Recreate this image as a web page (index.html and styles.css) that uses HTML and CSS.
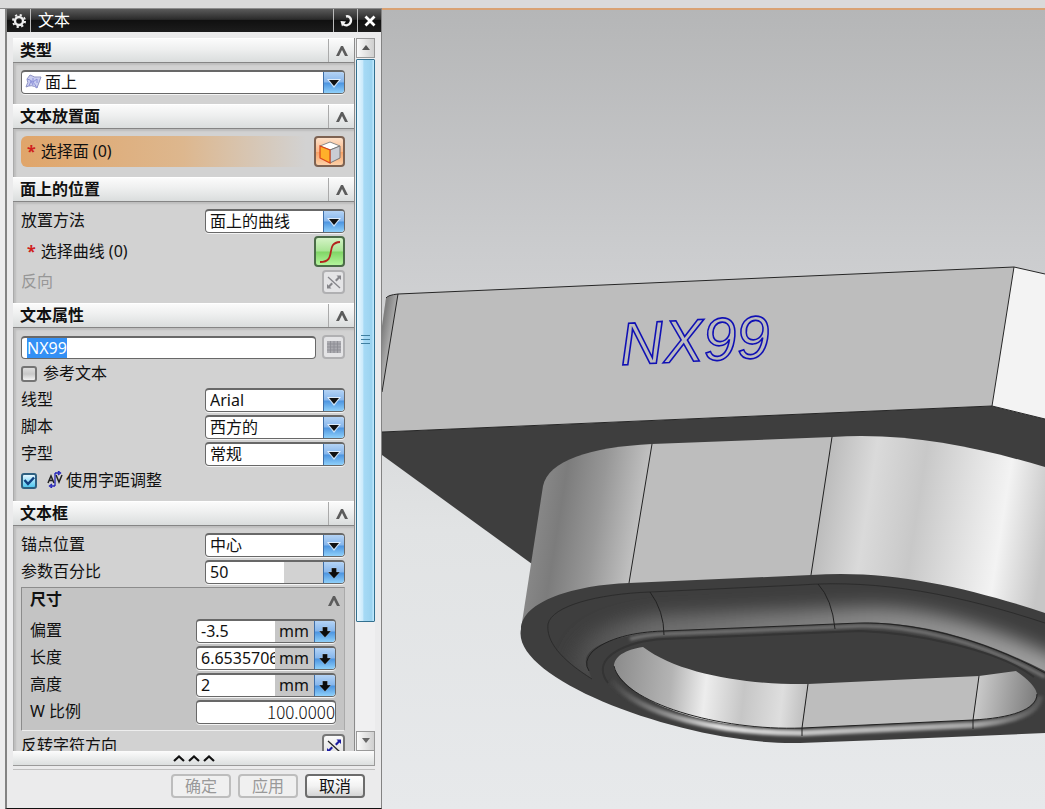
FILE: index.html
```html
<!DOCTYPE html>
<html lang="zh-CN">
<head>
<meta charset="utf-8">
<title>文本</title>
<link rel="stylesheet" href="styles.css">
</head>
<body>
<svg class="defs" aria-hidden="true">
  <symbol id="chev" viewBox="0 0 12 10"><path d="M0 10 5 0H7L12 10H9L6 4 3 10Z" fill="#5c5c5c"/></symbol>
  <symbol id="tri" viewBox="0 0 14 10"><path d="M0 1H14L7 10Z" fill="#fff" opacity=".7"/><path d="M2 2H12L7 8Z" fill="#111"/></symbol>
  <symbol id="down" viewBox="0 0 14 14"><path d="M4.500 2H9.500V6H13L7 12.500 1 6H4.500Z" fill="#0c0c0c" stroke="#fff" stroke-opacity=".35" stroke-width=".6"/></symbol>
  <symbol id="swap" viewBox="0 0 18 18"><path d="M3 4 15 15" stroke="currentColor" stroke-width="1.300"/><path d="M10 7 13 4 11.500 2.500H16V7L14.500 5.500 11.500 8.500ZM8 11 5 14 6.500 15.500H2V11L3.500 12.500 6.500 9.500Z" fill="var(--tip)"/></symbol>
</svg>
<header class="topstrip"></header>
<main class="workspace">
  <form class="dialog" aria-labelledby="title">
    <div class="titlebar">
      <button type="button" class="tb gear" aria-label="选项"><svg width="14" height="14" viewBox="0 0 14 14"><circle cx="7" cy="7" r="4" fill="none" stroke="#eee" stroke-width="2.400"/><circle cx="7" cy="7" r="6" fill="none" stroke="#eee" stroke-width="2" stroke-dasharray="2.200 2.510"/></svg></button>
      <h1 id="title">文本</h1>
      <button type="button" class="tb" aria-label="重置"><svg width="14" height="14" viewBox="0 0 14 14"><path d="M7 2.500C10.500 1.500 13 5 11.500 8.500 10 12 6 12 4 10" fill="none" stroke="#f4f4f4" stroke-width="2.400"/><path d="M1.500 7 7 7.500 3 12.500Z" fill="#f4f4f4"/></svg></button>
      <button type="button" class="tb" aria-label="关闭"><svg width="12" height="12" viewBox="0 0 12 12"><path d="M1.500 1.500 10.500 10.500M10.500 1.500 1.500 10.500" stroke="#fff" stroke-width="2.800"/></svg></button>
    </div>

    <div class="scroller">
      <div class="content">
        <section>
          <header class="head"><h2>类型</h2><button type="button" aria-label="折叠类型"><svg><use href="#chev"/></svg></button></header>
          <div class="body">
            <div class="combo wide">
              <svg class="face" width="17" height="16" viewBox="0 0 17 16"><path d="M5 1Q9 4 16 3L12 14Q7 10 1 13Q4 8 2 5Z" fill="#c9cdf0" stroke="#8f93c4"/><path d="M2 5Q8 6 12 14M4 12 6 7 8 11M8 4V8L12 5V9" fill="none" stroke="#8a8fd8"/></svg>
              <select aria-label="类型"><option>面上</option></select><span class="arrow"><svg><use href="#tri"/></svg></span>
            </div>
          </div>
        </section>

        <section>
          <header class="head"><h2>文本放置面</h2><button type="button" aria-label="折叠文本放置面"><svg><use href="#chev"/></svg></button></header>
          <div class="body">
            <div class="row tall active">
              <span class="label need"><b>*</b>选择面 (0)</span>
              <button type="button" class="pick orange" aria-label="选择面"><svg width="24" height="24" viewBox="0 0 24 24"><path d="M12 2 22 6 12 10 2 6Z" fill="#fff" stroke="#8a8a8a"/><path d="M12 10 22 6V18L12 23Z" fill="#c9ccd4" stroke="#777"/><path d="M2 6 12 10V23L2 18Z" fill="#ffb02a" stroke="#d9441c" stroke-width="1.200"/></svg></button>
            </div>
          </div>
        </section>

        <section>
          <header class="head"><h2>面上的位置</h2><button type="button" aria-label="折叠面上的位置"><svg><use href="#chev"/></svg></button></header>
          <div class="body">
            <div class="row"><label class="label" for="method">放置方法</label><div class="combo"><select id="method"><option>面上的曲线</option></select><span class="arrow"><svg><use href="#tri"/></svg></span></div></div>
            <div class="row tall"><span class="label need"><b>*</b>选择曲线 (0)</span><button type="button" class="pick green" aria-label="选择曲线"><svg width="24" height="24" viewBox="0 0 24 24"><path d="M2 22C20 22 6 3 22 2" fill="none" stroke="#b3231c" stroke-width="1.800"/></svg></button></div>
            <div class="row"><span class="label off">反向</span><button type="button" class="small off" disabled aria-label="反向"><svg width="18" height="18"><use href="#swap"/></svg></button></div>
          </div>
        </section>

        <section>
          <header class="head"><h2>文本属性</h2><button type="button" aria-label="折叠文本属性"><svg><use href="#chev"/></svg></button></header>
          <div class="body">
            <div class="row"><div class="textbox"><input id="txt" aria-label="文本" value="NX99"></div><button type="button" class="small off" disabled aria-label="参考文本列表"><svg width="14" height="14" viewBox="0 0 14 14"><path d="M0 1H14V13H0Z" fill="#aaaaaf"/><path d="M0 4H14M0 7H14M0 10H14M3.500 1V13M7 1V13M10.500 1V13" stroke="#8c8c92" stroke-width=".8"/></svg></button></div>
            <div class="row check"><input type="checkbox" id="ref"><label class="label" for="ref">参考文本</label></div>
            <div class="row"><label class="label" for="font">线型</label><div class="combo"><select id="font"><option>Arial</option></select><span class="arrow"><svg><use href="#tri"/></svg></span></div></div>
            <div class="row"><label class="label" for="script">脚本</label><div class="combo"><select id="script"><option>西方的</option></select><span class="arrow"><svg><use href="#tri"/></svg></span></div></div>
            <div class="row"><label class="label" for="style">字型</label><div class="combo"><select id="style"><option>常规</option></select><span class="arrow"><svg><use href="#tri"/></svg></span></div></div>
            <div class="row check kern"><input type="checkbox" id="kern" checked><label class="label" for="kern"><svg width="16" height="17" viewBox="0 0 16 17"><path d="M1 12 4 5 7 12M2 9.500H6M9 4 12 11 15 4" fill="none" stroke="#222" stroke-width="1.500"/><path d="M8 2V15M8 2H12M8 15H4M11 0 13.500 2 11 4M5 13 2.500 15 5 17" fill="none" stroke="#2222b8" stroke-width="1.300"/></svg>使用字距调整</label></div>
          </div>
        </section>

        <section>
          <header class="head"><h2>文本框</h2><button type="button" aria-label="折叠文本框"><svg><use href="#chev"/></svg></button></header>
          <div class="body">
            <div class="row"><label class="label" for="anchor">锚点位置</label><div class="combo"><select id="anchor"><option>中心</option></select><span class="arrow"><svg><use href="#tri"/></svg></span></div></div>
            <div class="row"><label class="label" for="pct">参数百分比</label><div class="combo unit"><input id="pct" value="50"><span class="u"></span><button type="button" class="arrow" aria-label="参数百分比选项"><svg class="d"><use href="#down"/></svg></button></div></div>
            <div class="group">
              <div class="grouphead"><h3>尺寸</h3><button type="button" aria-label="折叠尺寸"><svg><use href="#chev"/></svg></button></div>
              <div class="row"><label class="label" for="off">偏置</label><div class="combo unit"><input id="off" value="-3.5"><span class="u">mm</span><button type="button" class="arrow" aria-label="偏置选项"><svg class="d"><use href="#down"/></svg></button></div></div>
              <div class="row"><label class="label" for="len">长度</label><div class="combo unit"><input id="len" value="6.6535706"><span class="u">mm</span><button type="button" class="arrow" aria-label="长度选项"><svg class="d"><use href="#down"/></svg></button></div></div>
              <div class="row"><label class="label" for="hgt">高度</label><div class="combo unit"><input id="hgt" value="2"><span class="u">mm</span><button type="button" class="arrow" aria-label="高度选项"><svg class="d"><use href="#down"/></svg></button></div></div>
              <div class="row"><label class="label" for="wsc">W 比例</label><div class="combo num"><input id="wsc" value="100.0000"></div></div>
            </div>
            <div class="row"><span class="label">反转字符方向</span><button type="button" class="small" aria-label="反转字符方向"><svg width="18" height="18"><use href="#swap"/></svg></button></div>
          </div>
        </section>
      </div>
      <div class="scrollbar">
        <span class="sb"><svg width="8" height="6"><path d="M0 5 4 0 8 5Z" fill="#555"/></svg></span>
        <span class="thumb"><i></i></span>
        <span class="trough"></span>
        <span class="sb"><svg width="8" height="6"><path d="M0 0 4 5 8 0Z" fill="#666"/></svg></span>
      </div>
    </div>

    <button type="button" class="fold" aria-label="收起"><svg width="42" height="7" viewBox="0 0 42 7"><path d="M1 6 6 1.500 11 6M16 6 21 1.500 26 6M31 6 36 1.500 41 6" fill="none" stroke="#111" stroke-width="2.200"/></svg></button>
    <footer class="actions"><button type="button" disabled>确定</button><button type="button" disabled>应用</button><button type="button">取消</button></footer>
  </form>

  <div class="viewport">
    <svg viewBox="382 9 663 800" preserveAspectRatio="xMinYMin slice" role="img" aria-label="三维模型">
      <defs>
        <linearGradient id="wl" gradientUnits="userSpaceOnUse" x1="534" y1="505" x2="640" y2="522"><stop offset="0" stop-color="#8a8a8a"/><stop offset=".25" stop-color="#7c7c7c"/><stop offset=".6" stop-color="#979797"/><stop offset="1" stop-color="#c2c2c2"/></linearGradient>
        <linearGradient id="wr" gradientUnits="userSpaceOnUse" x1="822" y1="505" x2="1045" y2="540"><stop offset="0" stop-color="#bcbcbc"/><stop offset=".2" stop-color="#dadada"/><stop offset=".42" stop-color="#c8c8c8"/><stop offset=".62" stop-color="#dfdfdf"/><stop offset=".8" stop-color="#f3f3f3"/><stop offset="1" stop-color="#c6c6c6"/></linearGradient>
        <linearGradient id="iw" gradientUnits="userSpaceOnUse" x1="613" y1="680" x2="805" y2="700"><stop offset="0" stop-color="#8c8c8c"/><stop offset=".3" stop-color="#b4b4b4"/><stop offset=".48" stop-color="#ededed"/><stop offset=".68" stop-color="#c6c6c6"/><stop offset=".88" stop-color="#dedede"/><stop offset="1" stop-color="#c0c0c0"/></linearGradient>
        <linearGradient id="ir" gradientUnits="userSpaceOnUse" x1="976" y1="690" x2="1036" y2="700"><stop offset="0" stop-color="#cbcbcb"/><stop offset="1" stop-color="#7c7c7c"/></linearGradient>
        <linearGradient id="lip" gradientUnits="userSpaceOnUse" x1="612" y1="0" x2="1040" y2="0"><stop offset="0" stop-color="#444"/><stop offset=".12" stop-color="#8a8a8a"/><stop offset=".25" stop-color="#e2e2e2"/><stop offset=".45" stop-color="#c8c8c8"/><stop offset=".85" stop-color="#a8a8a8"/><stop offset="1" stop-color="#555"/></linearGradient>
        <linearGradient id="fil" gradientUnits="userSpaceOnUse" x1="382" y1="330" x2="393" y2="332"><stop offset="0" stop-color="#808080"/><stop offset="1" stop-color="#b4b4b4"/></linearGradient>
        <linearGradient id="gr" gradientUnits="userSpaceOnUse" x1="570" y1="0" x2="1045" y2="0"><stop offset="0" stop-color="#484848"/><stop offset=".18" stop-color="#6c6c6c"/><stop offset=".6" stop-color="#868686"/><stop offset="1" stop-color="#a0a0a0"/></linearGradient>
        <filter id="b10" filterUnits="userSpaceOnUse" x="500" y="540" width="620" height="240"><feGaussianBlur stdDeviation="9"/></filter>
        <filter id="b2" filterUnits="userSpaceOnUse" x="500" y="540" width="620" height="240"><feGaussianBlur stdDeviation="1.800"/></filter>
        <clipPath id="groove"><path d="M592 678C560 658 548 640 548 623C552 605 597 593 650 591L800 584C880 578 960 594 1060 627V678C980 634 910 620 860 622L663 630C620 634 575 645 588 668Z"/></clipPath>
        <clipPath id="base"><path d="M521 628C522 600 575 584 629 582L811 574C890 568 970 587 1045 612V732L880 739 800 742C690 745 510 680 521 628Z"/></clipPath>
      </defs>
      <path d="M382 454 532 563 1045 600V418L992 405 382 431Z" fill="#3e3e3e"/>
      <path d="M382 325 386 297Q388 294 398 293L1014 266 992 405 382 431Z" fill="#bdbdbd"/>
      <path d="M382 325 386 297Q388 294 398 293L382 391Z" fill="url(#fil)"/>
      <path d="M1014 266 1045 273V418L992 405Z" fill="#f3f3f3"/>
      <path d="M382 391 398 293M386 297Q388 294 398 293L1014 266 992 405 382 431M1014 266 1045 273M992 405 1045 418" fill="none" stroke="#262626"/>
      <path d="M521 628 543 485C548 460 590 446 652 443V560L629 590Z" fill="url(#wl)"/>
      <path d="M652 443 832 436 811 590H629Z" fill="#bdbdbd"/>
      <path d="M832 436C910 431 980 447 1045 466V625L811 590V574Z" fill="url(#wr)"/>
      <path d="M652 443 629 582M832 436 811 574" stroke="#222"/>
      <path d="M521 628C522 600 575 584 629 582L811 574C890 568 970 587 1045 612V732L880 739 800 742C690 745 510 680 521 628Z" fill="#3e3e3e"/>
      <g clip-path="url(#groove)"><path d="M590 675C580 648 620 637 663 633L860 625C910 623 980 639 1060 679" fill="none" stroke="url(#gr)" stroke-width="38" filter="url(#b10)"/></g>
      <g clip-path="url(#base)">
        <path d="M630 638Q645 634 663 633L860 625C910 624 980 640 1045 676" fill="none" stroke="#7c7c7c" stroke-width="3" filter="url(#b2)"/>
        <path d="M592 678C560 658 546 640 548 623C552 605 597 593 650 591L800 584C880 578 960 594 1045 622" fill="none" stroke="#2c2c2c"/>
        <path d="M589 670Q583 661 592 651C607 637 635 631 663 630L860 622C910 621 980 636 1045 672" fill="none" stroke="#222"/>
        <path d="M608 682C588 655 630 640 664 638L860 630C920 632 1000 650 1034 676" fill="none" stroke="#343434" stroke-width="2"/>
        <path d="M612 680C640 715 720 732 802 732L973 724C1020 720 1039 710 1040 695" fill="none" stroke="url(#lip)" stroke-width="6" filter="url(#b2)"/>
      </g>
      <path d="M643 646C624 649 613 656 614 667C635 708 720 730 802 727L808 683C750 684 680 674 643 646Z" fill="url(#iw)"/>
      <path d="M808 683 979 675 973 719 802 727Z" fill="#bdbdbd"/>
      <path d="M979 675 1016 670Q1035 683 1037 693C1036 712 1000 718 973 719Z" fill="url(#ir)"/>
      <path d="M614 665C622 702 720 730 802 727L973 719C1010 717 1037 709 1037 693M808 683 802 727V735M979 675 973 719V728M650 591Q664 610 664 634M818 583Q832 598 835 628" fill="none" stroke="#222"/>
      <text class="sketch" x="621" y="364" transform="rotate(-3 621 364)">NX99</text>
    </svg>
  </div>
</main>
<script>
const t = document.getElementById('txt');
t.focus({ preventScroll: true });
t.select();
</script>
</body>
</html>
```
FILE: styles.css
```css
* { box-sizing: border-box; }
body {
  margin: 0;
  height: 100vh;
  display: flex;
  flex-direction: column;
  overflow: hidden;
  background: #ededee;
  color: #111;
  font: 16px/22px "Noto Sans", "Noto Sans CJK SC", sans-serif;
}
button, input, select { font: inherit; color: inherit; margin: 0; padding: 0; border: 0; background: none; outline: 0; }
h1, h2, h3 { margin: 0; font-size: 16px; line-height: 22px; }
.defs { position: absolute; width: 0; height: 0; }
.topstrip { height: 9px; flex: none; background: #dadada; border-bottom: 1px solid #8c8c8c; }
.workspace { flex: 1; min-height: 0; display: flex; padding-left: 5px; }

.dialog {
  width: 377px;
  flex: none;
  display: flex;
  flex-direction: column;
  border: solid #838383;
  border-width: 0 1px 1px 2px;
  border-bottom-color: #111;
  background: #ebebec;
}
.titlebar { display: flex; height: 23px; flex: none; background: linear-gradient(#5a5a5a, #2b2b2b 45%, #101010 50%, #1c1c1c); color: #fff; }
.titlebar h1 { flex: 1; padding-left: 7px; font-weight: 400; }
.tb { width: 24px; display: grid; place-items: center; border-left: 1px solid #bbb; }
.gear { border-left: 0; border-right: 1px solid #bbb; }

.scroller { flex: 1; min-height: 0; display: flex; gap: 1px; margin: 6px 6px 0; }
.content { flex: 1; min-width: 0; overflow: hidden; background: #d2d2d2; border-right: 1px solid #8b8b8b; }
.head { display: flex; height: 25px; border-bottom: 1px solid #858585; border-top: 1px solid #fff; background: linear-gradient(#fbfbfb, #eeefef 45%, #dadddd); }
.head h2 { flex: 1; padding-left: 7px; }
.head button { width: 26px; border-left: 1px solid #aaa; display: grid; place-items: center; }
.head svg, .grouphead svg { width: 12px; height: 10px; }
.body { padding: 7px 9px 9px 7px; display: flex; flex-direction: column; gap: 3px; border-left: 1px solid #aaa; box-shadow: inset 2px 2px 2px #bdbdbd; }
section:nth-child(-n+2) .body { padding-bottom: 10px; }
.row { display: flex; height: 24px; align-items: center; justify-content: space-between; flex: none; }
.row.tall { height: 31px; }
.label { padding-bottom: 2px; }
.need { padding-left: 6px; }
.need b { color: #d0201c; margin-right: 5px; }
.off { color: #979797; }
.active { border-radius: 6px; background: linear-gradient(90deg, #e0a56a, #ddb78e 50%, #d2d2d2 88%); }

.combo { display: flex; width: 140px; height: 24px; overflow: hidden; background: #fff; border: 1px solid #686868; border-top-width: 2px; border-radius: 4px; box-shadow: 0 1px #f4f4f4; }
.combo.wide { width: 100%; }
.combo select, .combo input { flex: 1; min-width: 0; height: 20px; line-height: 20px; padding-left: 4px; appearance: none; }
.face { margin: 2px 0 0 3px; }
.face + select { padding-left: 3px; }
.arrow { width: 21px; flex: none; display: grid; place-items: center; border-left: 1px solid #3f6fa8; background: linear-gradient(#b4d3f5, #86b6ec 48%, #4c94e0 52%, #8fd0fa); }
.arrow svg { width: 14px; height: 10px; }
.arrow svg.d { height: 14px; }
.u { width: 39px; padding-left: 4px; background: #d2d2d2; line-height: 21px; }
.group .u { background: #c6c6c6; }
.combo.num input { text-align: right; font-family: "Noto Sans CJK SC", sans-serif; font-size: 17px; font-weight: 300; }
.textbox { flex: 1; margin-right: 6px; height: 23px; display: flex; padding-left: 5px; align-items: center; border: 1px solid #686868; border-top-width: 2px; border-radius: 4px; background: #fff; }
.textbox input { width: 100%; height: 20px; line-height: 20px; }
.textbox input::selection { background: #3390f5; color: #fff; }

.pick { width: 31px; height: 31px; display: grid; place-items: center; border: 2px solid #7d6252; border-radius: 4px; }
.orange { background: linear-gradient(#fde0c8, #fbb98a 50%, #f8a265 52%, #fcd0a8); }
.green { border-color: #4b6b48; background: linear-gradient(#d4f3c6, #a9e495 48%, #80d566 52%, #b4f59c); }
.small { width: 23px; height: 24px; display: grid; place-items: center; border: 2px solid #777; border-radius: 4px; background: linear-gradient(#fafafa, #ddd); color: #222; --tip: #1c1ca0; }
.small.off { border-color: #b0b0b2; color: #85858a; --tip: #85858a; background: #e4e4e6; }

.check { justify-content: flex-start; height: 23px; gap: 6px; }
.check input { appearance: none; width: 16px; height: 16px; border: 2px solid #747474; border-radius: 3px; background: linear-gradient(#ddd, #c8c8c8 50%, #f2f2f2); }
.check input:checked { border-color: #2f6080; background: url("data:image/svg+xml,%3Csvg xmlns='http://www.w3.org/2000/svg' viewBox='0 0 12 12'%3E%3Cpath d='M1.500 5 5 9 11 2.500' fill='none' stroke='%23104080' stroke-width='2.500'/%3E%3C/svg%3E"), linear-gradient(#e4f6ff, #50c8f0); }
.kern { gap: 10px; }
.kern label { display: flex; align-items: center; gap: 3px; }

.group { background: #c4c4c4; border: 1px solid #8c8c8c; border-bottom-color: #eee; border-right-color: #aaa; padding: 0 8px 6px; display: flex; flex-direction: column; gap: 3px; }
.grouphead { height: 28px; display: flex; justify-content: space-between; }
.grouphead button { width: 12px; height: 24px; margin-right: -4px; }

.scrollbar { width: 19px; display: flex; flex-direction: column; background: #f0f0f1; }
.sb { height: 20px; flex: none; display: grid; place-items: center; border: 1px solid #999; background: linear-gradient(90deg, #fafafa, #cfcfcf); }
.thumb { flex: 562; margin-top: 1px; display: grid; place-items: center; border: 1px solid #33708f; border-radius: 1px; background: linear-gradient(90deg, #eaf8ff, #caeafb 35%, #a6daf5 40%, #9bd3f0 85%, #c4ecff); }
.thumb i { width: 9px; height: 11px; background: repeating-linear-gradient(#3f7fa0 0 1px, transparent 1px 4px); }
.trough { flex: 109; }

.fold { height: 15px; flex: none; margin: 0 6px; display: grid; place-items: center; background: linear-gradient(#fcfcfc, #dcdfdf); border: solid #9a9a9a; border-width: 0 1px 1px 0; }
.actions { display: flex; justify-content: flex-end; gap: 7px; margin: 3px 6px 0; padding: 4px 10px 10px 0; border-top: 1px solid #c0c0c0; }
.actions button { width: 60px; height: 24px; border: 2px solid #6c6c6c; border-radius: 4px; background: linear-gradient(#fff, #f2f2f2 50%, #d5d5d5); line-height: 18px; }
.actions button:disabled { border-color: #bdbdbd; color: #999; background: #f0f0f0; }

.viewport { flex: 1; min-width: 0; border-top: 2px solid #d9a273; background: linear-gradient(#b5b6b7, #cbccce 30%, #e1e3e4 65%, #e7e9eb); margin-top: -1px; }
.viewport svg { display: block; width: 100%; height: 100%; }
.sketch { font: italic 60px "Liberation Sans", sans-serif; fill: none; stroke: #1010b4; stroke-width: 1.6px; }
```
